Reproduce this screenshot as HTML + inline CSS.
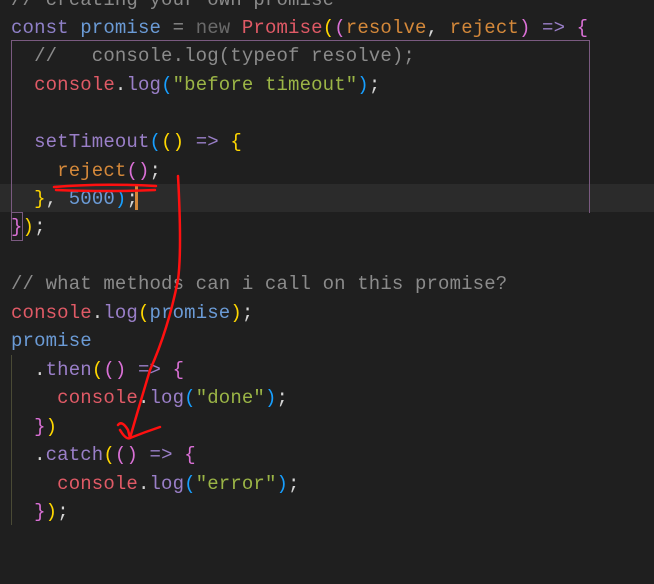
<!DOCTYPE html>
<html><head><style>
body{margin:0;width:654px;height:584px;background:#1f1f1f;overflow:hidden;position:relative;font-family:"Liberation Mono",monospace;font-size:19px}
.l{position:absolute;left:11px;white-space:pre;height:28px;line-height:28px;letter-spacing:0.14px}
.k{color:#8f80c8}.v{color:#6b9bd6}.o{color:#8a8a8a}.n{color:#6a6a6a}.r{color:#e05a66}.p{color:#d4883a}.c{color:#8b8b8b}.f{color:#9a7fc8}.s{color:#9bb546}.y{color:#ffd700}.m{color:#da70d6}.b{color:#179fff}.w{color:#d4d4d4}.num{color:#6b9bd6}
</style></head><body>
<div style="position:absolute;left:0;top:184px;width:654px;height:28px;background:#2b2b2b"></div>
<div style="position:absolute;left:11px;top:40px;width:577px;height:172px;border:1px solid #7a5a80;border-bottom:none"></div>
<div style="position:absolute;left:11px;top:212px;width:10px;height:27px;border:1px solid #7a5a80"></div>
<div style="position:absolute;left:11px;top:355px;width:1px;height:170px;background:#4a4a35"></div>
<div style="position:absolute;left:135px;top:186px;width:3px;height:24px;background:#d4883a"></div>
<div class="l" style="top:-14px"><span class="c">// creating your own promise</span></div>
<div class="l" style="top:14px"><span class="k">const</span> <span class="v">promise</span> <span class="o">=</span> <span class="n">new</span> <span class="r">Promise</span><span class="y">(</span><span class="m">(</span><span class="p">resolve</span><span class="w">, </span><span class="p">reject</span><span class="m">)</span> <span class="f">=&gt;</span> <span class="m">{</span></div>
<div class="l" style="top:42px">  <span class="c">//   console.log(typeof resolve);</span></div>
<div class="l" style="top:71px">  <span class="r">console</span><span class="w">.</span><span class="f">log</span><span class="b">(</span><span class="s">"before timeout"</span><span class="b">)</span><span class="w">;</span></div>
<div class="l" style="top:128px">  <span class="f">setTimeout</span><span class="b">(</span><span class="y">()</span> <span class="f">=&gt;</span> <span class="y">{</span></div>
<div class="l" style="top:157px">    <span class="p">reject</span><span class="m">()</span><span class="w">;</span></div>
<div class="l" style="top:185px">  <span class="y">}</span><span class="w">, </span><span class="num">5000</span><span class="b">)</span><span class="w">;</span></div>
<div class="l" style="top:213px"><span class="m">}</span><span class="y">)</span><span class="w">;</span></div>
<div class="l" style="top:270px"><span class="c">// what methods can i call on this promise?</span></div>
<div class="l" style="top:299px"><span class="r">console</span><span class="w">.</span><span class="f">log</span><span class="y">(</span><span class="v">promise</span><span class="y">)</span><span class="w">;</span></div>
<div class="l" style="top:327px"><span class="v">promise</span></div>
<div class="l" style="top:356px">  <span class="w">.</span><span class="f">then</span><span class="y">(</span><span class="m">()</span> <span class="f">=&gt;</span> <span class="m">{</span></div>
<div class="l" style="top:384px">    <span class="r">console</span><span class="w">.</span><span class="f">log</span><span class="b">(</span><span class="s">"done"</span><span class="b">)</span><span class="w">;</span></div>
<div class="l" style="top:413px">  <span class="m">}</span><span class="y">)</span></div>
<div class="l" style="top:441px">  <span class="w">.</span><span class="f">catch</span><span class="y">(</span><span class="m">()</span> <span class="f">=&gt;</span> <span class="m">{</span></div>
<div class="l" style="top:470px">    <span class="r">console</span><span class="w">.</span><span class="f">log</span><span class="b">(</span><span class="s">"error"</span><span class="b">)</span><span class="w">;</span></div>
<div class="l" style="top:498px">  <span class="m">}</span><span class="y">)</span><span class="w">;</span></div>
<svg style="position:absolute;left:0;top:0" width="654" height="584" fill="none" stroke="#ff1010" stroke-width="2.5" stroke-linecap="round">
<path d="M54 187 Q100 183 156 186"/>
<path d="M56 190 Q110 192 155 190"/>
<path d="M178 176 Q182 250 178 280 Q168 330 150 370 Q138 410 130 438"/>
<path d="M118 425 Q122 420 128 430 L130 438 Q126 440 120 430 M130 438 Q145 432 160 427"/>
</svg>
</body></html>
